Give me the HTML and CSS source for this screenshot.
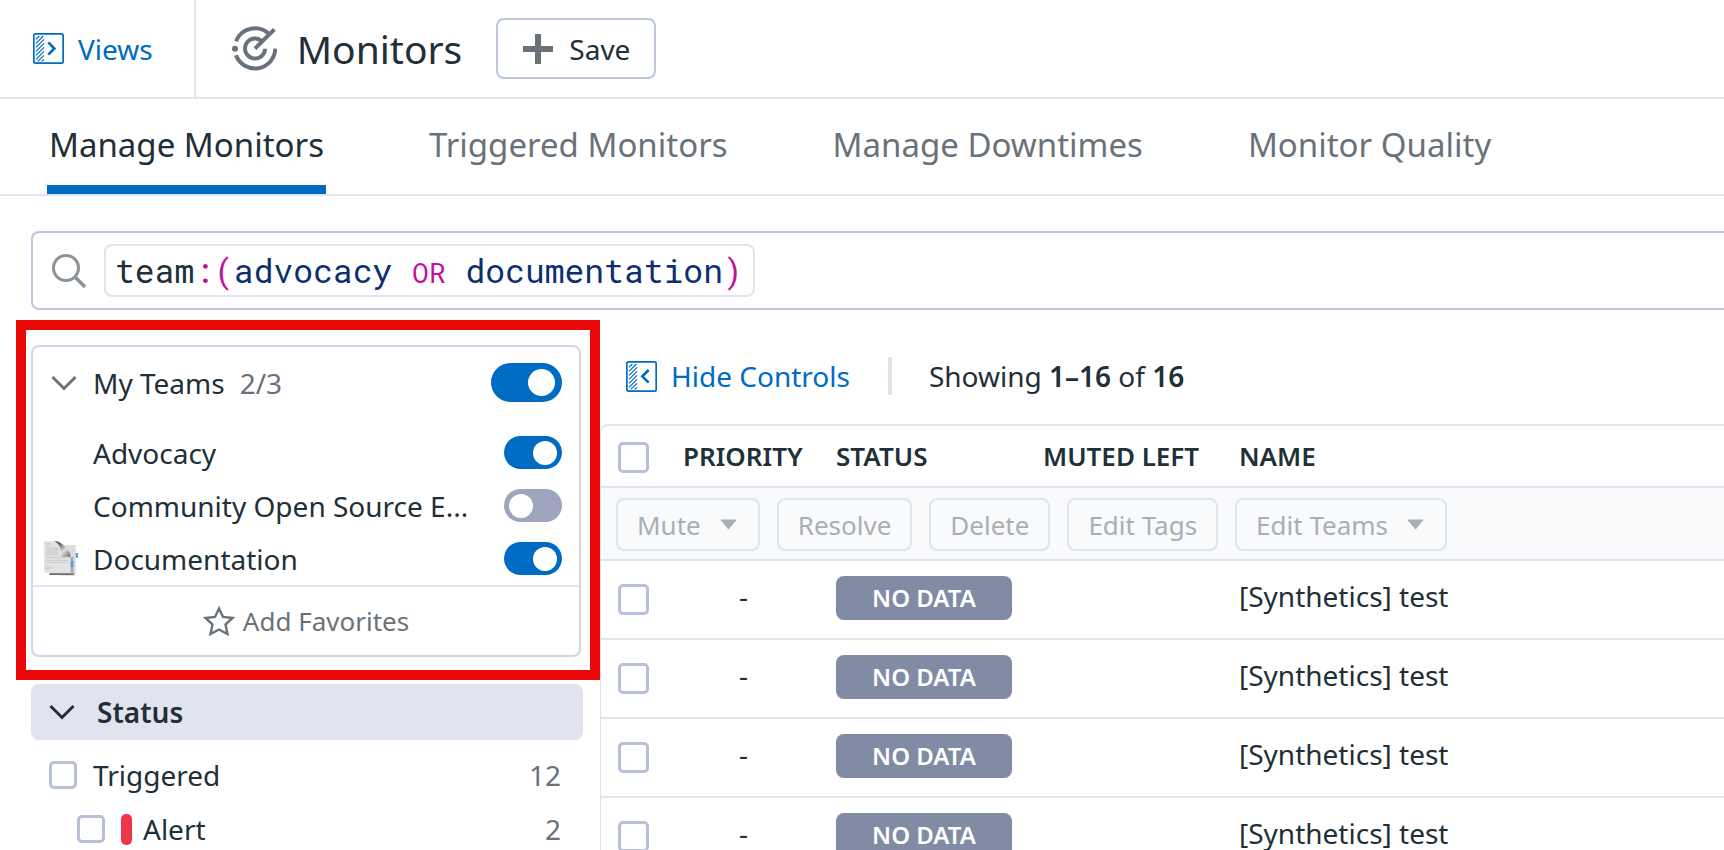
FILE: index.html
```html
<!DOCTYPE html>
<html lang="en">
<head>
<meta charset="utf-8">
<title>Monitors</title>
<link rel="stylesheet" href="styles.css">
</head>
<body>
<svg class="defs" aria-hidden="true">
  <symbol id="panel" viewBox="0 0 93 93">
    <rect x="2.500" y="2.500" width="88" height="88" rx="5" fill="none" stroke="currentColor" stroke-width="5"/>
    <path d="M9 19L19 9M9 31L31 9M9 43L33 19M9 55L33 31M9 67L33 43M9 79L33 55M14 85L33 67M26 85L33 79" fill="none" stroke="currentColor" stroke-width="3.600"/>
  </symbol>
  <symbol id="chevron" viewBox="0 0 26 16">
    <path d="M1.500 2L13 13.500L24.500 2" fill="none" stroke="currentColor" stroke-width="3"/>
  </symbol>
</svg>

<header class="topbar">
  <a class="views" href="#views">
    <svg class="icon-panel" viewBox="0 0 93 93" aria-hidden="true"><use href="#panel"/><path d="M46 28L64 46.500L46 65" fill="none" stroke="currentColor" stroke-width="8"/></svg>
    Views
  </a>
  <div class="heading">
    <svg class="icon-monitor" viewBox="0 0 135 135" aria-hidden="true">
      <g fill="none" stroke="currentColor" stroke-width="12">
        <path d="M12 46A61 61 0 0 1 112 25"/>
        <path d="M130 68A61 61 0 0 1 12 88"/>
        <path d="M99 68A30 30 0 1 1 91 47"/>
        <path d="M69 68L127 10"/>
      </g>
      <circle cx="9" cy="68" r="9" fill="currentColor"/>
    </svg>
    <h1 class="title">Monitors</h1>
    <button class="save" type="button">
      <svg class="icon-plus" viewBox="0 0 30 30" aria-hidden="true"><path d="M15 0V30M0 15H30" stroke="currentColor" stroke-width="6"/></svg>
      Save
    </button>
  </div>
</header>

<nav class="tabs">
  <a class="tab tab-active" href="#manage" aria-current="page">Manage Monitors</a>
  <a class="tab" href="#triggered">Triggered Monitors</a>
  <a class="tab" href="#downtimes">Manage Downtimes</a>
  <a class="tab" href="#quality">Monitor Quality</a>
</nav>

<div class="search" role="search">
  <svg class="icon-search" viewBox="0 0 34 34" aria-hidden="true"><circle cx="14" cy="14" r="12.500" fill="none" stroke="currentColor" stroke-width="3"/><path d="M23 23L33 33" stroke="currentColor" stroke-width="3.500"/></svg>
  <span class="token">team<span class="op">:(</span><span class="value">advocacy</span> <span class="op word">OR</span> <span class="value">documentation</span><span class="op">)</span></span>
  <input class="query" type="text" aria-label="Search monitors">
</div>

<div class="columns">
  <aside class="sidebar">
    <div class="highlight">
      <section class="teams">
        <div class="teams-head">
          <svg class="icon-chevron" aria-hidden="true"><use href="#chevron"/></svg>
          <label for="all">My Teams</label><span class="muted">2/3</span>
          <input class="switch switch-large" id="all" type="checkbox" role="switch" checked>
        </div>
        <ul class="team-list">
          <li class="team"><label class="team-name" for="t1">Advocacy</label><input class="switch" id="t1" type="checkbox" role="switch" checked></li>
          <li class="team"><label class="team-name" for="t2">Community Open Source E...</label><input class="switch" id="t2" type="checkbox" role="switch"></li>
          <li class="team">
            <svg class="icon-doc" viewBox="0 0 105 105" aria-hidden="true">
              <defs>
                <linearGradient id="curl" x1="0" y1="0" x2="1" y2="1"><stop offset="0.200" stop-color="#555"/><stop offset="0.600" stop-color="#ddd"/><stop offset="1" stop-color="#666"/></linearGradient>
                <linearGradient id="edge" x1="0" y1="0" x2="0" y2="1"><stop offset="0" stop-color="#bbb"/><stop offset="1" stop-color="#555"/></linearGradient>
              </defs>
              <path d="M48 12H95V104H48Z" fill="#dcdcdc"/>
              <path d="M16 94H90V102H16Z" fill="url(#edge)"/>
              <path d="M78 48H88V98H78Z" fill="#aaa"/>
              <path d="M0 0H36Q50 4 52 24Q54 42 80 47V95H0Z" fill="#e3e3e3"/>
              <path d="M32 0Q50 2 64 18Q80 32 80 47H52Q54 14 32 0Z" fill="url(#curl)"/>
              <path d="M6 8H18M6 13H20M6 50H80M8 58H74M8 65H70M6 78H26M6 83H22" stroke="#bdbdbd" stroke-width="2"/>
              <path d="M6 18H44V44H6Z" fill="#d4d4d4"/>
              <path d="M95 36H102V50H95ZM80 60H88V78H80Z" fill="#4e9df0"/>
            </svg>
            <label class="team-name" for="t3">Documentation</label><input class="switch" id="t3" type="checkbox" role="switch" checked>
          </li>
        </ul>
        <button class="favorites" type="button">
          <svg class="icon-star" viewBox="0 0 32 30" aria-hidden="true"><path d="M16 2.500L20 11L29.500 12L22.500 18.500L24.500 28L16 23.500L7.500 28L9.500 18.500L2.500 12L12 11Z" fill="none" stroke="currentColor" stroke-width="2.400"/></svg>
          Add Favorites
        </button>
      </section>
    </div>
    <section class="facet">
      <button class="facet-head" type="button"><svg class="icon-chevron" aria-hidden="true"><use href="#chevron"/></svg>Status</button>
      <div class="facet-body">
        <div class="facet-row"><input class="check check-small" id="f1" type="checkbox"><label class="facet-label" for="f1">Triggered</label><span class="muted">12</span></div>
        <div class="facet-row facet-child"><input class="check check-small" id="f2" type="checkbox"><i class="alert-bar"></i><label class="facet-label" for="f2">Alert</label><span class="muted">2</span></div>
      </div>
    </section>
  </aside>

  <main class="main">
    <div class="summary">
      <button class="hide" type="button">
        <svg class="icon-panel" viewBox="0 0 93 93" aria-hidden="true"><use href="#panel"/><path d="M68 27L49 46L68 65" fill="none" stroke="currentColor" stroke-width="8"/></svg>
        Hide Controls
      </button>
      <p class="showing">Showing <b>1–16</b> of <b>16</b></p>
    </div>
    <div class="table-wrap">
      <table class="monitors">
        <colgroup><col class="col-check"><col class="col-priority"><col class="col-status"><col class="col-muted"><col></colgroup>
        <thead>
          <tr><th class="pick"><input class="check" type="checkbox" aria-label="Select all"></th><th>PRIORITY</th><th>STATUS</th><th>MUTED LEFT</th><th>NAME</th></tr>
          <tr><td class="bulk" colspan="5">
            <div class="actions">
              <button class="action" type="button" disabled>Mute<svg class="icon-caret" viewBox="0 0 17 11" aria-hidden="true"><path d="M1 1H16L8.500 10Z" fill="currentColor" stroke="currentColor" stroke-linejoin="round"/></svg></button>
              <button class="action" type="button" disabled>Resolve</button>
              <button class="action" type="button" disabled>Delete</button>
              <button class="action" type="button" disabled>Edit Tags</button>
              <button class="action" type="button" disabled>Edit Teams<svg class="icon-caret" viewBox="0 0 17 11" aria-hidden="true"><path d="M1 1H16L8.500 10Z" fill="currentColor" stroke="currentColor" stroke-linejoin="round"/></svg></button>
            </div>
          </td></tr>
        </thead>
        <tbody>
          <tr><td class="pick"><input class="check" type="checkbox" aria-label="Select monitor 1"></td><td class="priority">-</td><td class="status"><span class="badge">NO DATA</span></td><td></td><td class="name">[Synthetics] test</td></tr>
          <tr><td class="pick"><input class="check" type="checkbox" aria-label="Select monitor 2"></td><td class="priority">-</td><td class="status"><span class="badge">NO DATA</span></td><td></td><td class="name">[Synthetics] test</td></tr>
          <tr><td class="pick"><input class="check" type="checkbox" aria-label="Select monitor 3"></td><td class="priority">-</td><td class="status"><span class="badge">NO DATA</span></td><td></td><td class="name">[Synthetics] test</td></tr>
          <tr><td class="pick"><input class="check" type="checkbox" aria-label="Select monitor 4"></td><td class="priority">-</td><td class="status"><span class="badge">NO DATA</span></td><td></td><td class="name">[Synthetics] test</td></tr>
        </tbody>
      </table>
    </div>
  </main>
</div>
</body>
</html>
```
FILE: styles.css
```css
:root {
  --text: #212f38;
  --grey: #69727a;
  --blue: #006bc2;
  --line: #e1e4ee;
  --control: #bec6de;
}

* { box-sizing: border-box; }

body {
  margin: 0;
  height: 100vh;
  overflow: hidden;
  background: #fff;
  color: var(--text);
  font: 400 28px/36px "Noto Sans", sans-serif;
}

button, input { font: inherit; color: inherit; margin: 0; }
button { background: none; border: 0; padding: 0; }
a { color: inherit; text-decoration: none; }
svg { display: block; flex: none; }
.defs { position: absolute; width: 0; height: 0; }
.muted { color: var(--grey); }

/* Top bar */
.topbar { display: flex; border-bottom: 2px solid var(--line); }
.views {
  display: flex;
  align-items: center;
  gap: 14px;
  padding: 0 41px 0 33px;
  border-right: 2px solid var(--line);
  color: var(--blue);
}
.icon-panel { width: 31px; height: 31px; }
.heading { display: flex; align-items: center; height: 97px; padding-left: 36px; }
.icon-monitor { width: 45px; height: 45px; color: var(--grey); }
.title { margin: 0 34px 0 20px; font-size: 39px; line-height: 54px; font-weight: 400; }
.save {
  display: flex;
  align-items: center;
  gap: 16px;
  height: 61px;
  padding: 0 24px 0 25px;
  border: 2px solid var(--control);
  border-radius: 8px;
}
.icon-plus { width: 30px; height: 30px; color: var(--grey); }

/* Tabs */
.tabs { display: flex; gap: 101px; padding-left: 47px; border-bottom: 2px solid var(--line); }
.tab {
  padding: 6px 2px 0;
  border-bottom: 9px solid transparent;
  color: var(--grey);
  font-size: 33px;
  line-height: 80px;
  white-space: nowrap;
}
.tab-active { color: var(--text); border-color: var(--blue); }

/* Search */
.search {
  display: flex;
  align-items: center;
  margin: 35px 0 0 31px;
  height: 79px;
  padding-left: 19px;
  border: 2px solid var(--control);
  border-right: 0;
  border-radius: 8px 0 0 8px;
}
.icon-search { width: 34px; height: 34px; margin-right: 18px; color: #8b9399; }
.token {
  padding: 0 10px 0 9px;
  border: 2px solid var(--line);
  border-radius: 8px;
  font: 400 33px/49px "Roboto Mono", "DejaVu Sans Mono", monospace;
  white-space: nowrap;
}
.op { color: #c4109c; }
.word { font-size: 28px; line-height: 28px; }
.value { color: #0b2f70; }
.query { flex: 1; min-width: 0; height: 53px; border: 0; outline: 0; background: none; }

/* Sidebar */
.columns { display: flex; align-items: flex-start; padding-top: 10px; }
.sidebar { flex: none; width: 600px; padding-left: 16px; }
.highlight { padding: 15px 9px 13px 5px; border: 10px solid #ea0707; }
.teams { border: 2px solid #d1d6e6; border-radius: 8px; }
.teams-head { display: flex; align-items: center; height: 71px; padding: 0 17px 0 18px; }
.teams-head .icon-chevron { color: var(--grey); margin-right: 16px; }
.teams-head .muted { margin-left: 15px; }
.teams-head .switch { margin-left: auto; }
.icon-chevron { width: 26px; height: 16px; }
.team-list { margin: 0; padding: 8px 0 0; list-style: none; border-bottom: 2px solid var(--line); }
.team {
  display: grid;
  grid-template-columns: 49px 1fr auto;
  align-items: center;
  height: 53px;
  padding: 0 17px 0 11px;
}
.team-name { grid-column: 2; white-space: nowrap; }
.icon-doc { width: 35px; height: 35px; }
.team .switch { grid-column: 3; }

.switch {
  appearance: none;
  display: flex;
  align-items: center;
  flex: none;
  width: 58px;
  height: 33px;
  padding: 0 5px;
  border-radius: 20px;
  background: #9fa5bc;
}
.switch::before { content: ""; width: 24px; height: 24px; border-radius: 50%; background: #fff; }
.switch:checked { justify-content: flex-end; background: var(--blue); }
.switch-large { width: 71px; height: 39px; padding: 0 7px; }
.switch-large::before { width: 27px; height: 27px; }

.favorites {
  display: flex;
  align-items: center;
  justify-content: center;
  gap: 8px;
  width: 100%;
  height: 68px;
  color: var(--grey);
  font-size: 26px;
}
.icon-star { width: 32px; height: 30px; }

.facet { padding: 4px 17px 0 15px; }
.facet-head {
  display: flex;
  align-items: center;
  gap: 22px;
  width: 100%;
  height: 56px;
  padding-left: 18px;
  border-radius: 8px;
  background: var(--line);
  font-weight: 600;
}
.facet-body { padding: 8px 22px 0 18px; }
.facet-row { display: flex; align-items: center; height: 54px; }
.facet-child { padding-left: 28px; }
.facet-label { flex: 1; margin-left: 16px; }
.alert-bar { width: 11px; height: 31px; margin-left: 16px; border-radius: 5px; background: #ee374c; }
.alert-bar + .facet-label { margin-left: 11px; }

.check {
  appearance: none;
  display: block;
  flex: none;
  width: 31px;
  height: 31px;
  border: 3px solid #b7bfd9;
  border-radius: 5px;
  background: #fff;
}
.check-small { width: 28px; height: 28px; }

/* Monitor list */
.main { flex: 1; min-width: 0; }
.summary { display: flex; align-items: center; height: 104px; padding: 8px 0 0 26px; }
.hide { display: flex; align-items: center; gap: 14px; color: var(--blue); }
.showing { margin: 0 0 0 38px; padding-left: 37px; border-left: 4px solid var(--line); line-height: 38px; }
.showing b { font-weight: 600; }
.table-wrap {
  border: solid var(--line);
  border-width: 2px 0 0 1px;
  border-radius: 8px 0 0 0;
  overflow: hidden;
}
.monitors { width: 100%; table-layout: fixed; border-collapse: separate; border-spacing: 0; }
.col-check { width: 82px; }
.col-priority { width: 153px; }
.col-status { width: 207px; }
.col-muted { width: 196px; }
.monitors th, .monitors td { padding: 0; border-bottom: 2px solid var(--line); text-align: left; }
.monitors th { height: 62px; font-size: 26px; font-weight: 600; }
.monitors td { height: 79px; }
.monitors .pick { padding-left: 17px; }
.monitors th.pick { padding-top: 3px; }
.monitors .priority { padding: 0 32px 7px 0; text-align: center; }
.monitors .status { padding-bottom: 3px; }
.monitors .name { padding-bottom: 7px; }
.monitors .bulk { height: 73px; padding: 10px 0 8px 15px; background: #f9fafc; }
.actions { display: flex; gap: 17px; }
.action {
  display: flex;
  align-items: center;
  gap: 19px;
  height: 53px;
  padding: 0 19px;
  border: 2px solid var(--line);
  border-radius: 8px;
  color: #a9afb4;
  font-size: 26px;
  line-height: 34px;
  white-space: nowrap;
}
.icon-caret { width: 17px; height: 11px; margin-right: 2px; }
.badge {
  display: block;
  width: 176px;
  border-radius: 8px;
  background: #828ba4;
  color: #fff;
  font-size: 24px;
  line-height: 44px;
  font-weight: 600;
  text-align: center;
}
```
